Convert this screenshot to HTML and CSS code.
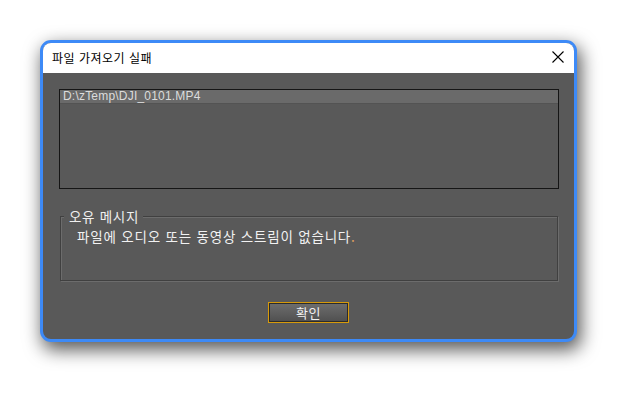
FILE: index.html
```html
<!DOCTYPE html>
<html lang="ko">
<head>
<meta charset="utf-8">
<link rel="stylesheet" href="styles.css">
</head>
<body>
<div class="window">
  <div class="titlebar">
    <span class="title">파일 가져오기 실패</span>
    <svg class="close" width="12" height="12" viewBox="0 0 12 12"><path d="M0.5 0.5 L11.5 11.5 M11.5 0.5 L0.5 11.5" stroke="#000" stroke-width="1.1" fill="none"/></svg>
  </div>
  <div class="content">
    <div class="listbox">
      <div class="row">D:\zTemp\DJI_0101.MP4</div>
    </div>
    <div class="group">
      <span class="legend">오유 메시지</span>
      <div class="message">파일에 오디오 또는 동영상 스트림이 없습니다<span class="dot">.</span></div>
    </div>
    <div class="actions">
      <button class="btn">확인</button>
    </div>
  </div>
</div>
</body>
</html>
```
FILE: styles.css
```css
html, body {
  margin: 0;
  padding: 0;
  background: #ffffff;
}
body {
  box-sizing: border-box;
  min-height: 100vh;
  padding: 40px 0 0 40px;
  font-family: "Noto Sans CJK KR", "Noto Sans", sans-serif;
}
.window {
  width: 531px;
  height: 296px;
  border: 3px solid #3d8af7;
  border-radius: 11px;
  background: #595959;
  overflow: hidden;
  display: flex;
  flex-direction: column;
  box-shadow: 3px 7px 18px 1px rgba(0,0,0,0.65);
}
.titlebar {
  height: 30px;
  flex: none;
  background: #ffffff;
  display: flex;
  align-items: center;
  justify-content: space-between;
  padding: 0 9px 0 9px;
}
.title {
  font-size: 12px;
  letter-spacing: 0.5px;
  color: #000;
  line-height: 1;
  margin-top: -1px;
}
.close {
  display: block;
  margin-right: 1px;
  margin-top: -2px;
}
.content {
  flex: 1;
  display: flex;
  flex-direction: column;
  padding: 16px 15px 0 16px;
}
.listbox {
  height: 98px;
  border: 1px solid #151515;
  background: #595959;
}
.row {
  height: 13px;
  line-height: 13px;
  background: #6a6a6a;
  border-bottom: 1px solid #535353;
  font-family: "Liberation Sans", Arial, sans-serif;
  font-size: 12px;
  letter-spacing: 0.2px;
  color: #dcdcdc;
  padding-left: 3px;
}
.group {
  margin: 27px 1px 0 1px;
  height: 63px;
  border: 1px solid #404040;
  box-shadow: 1px 1px 0 #6c6c6c, inset 1px 1px 0 #6c6c6c;
  display: flex;
  flex-direction: column;
}
.legend {
  align-self: flex-start;
  margin: -10px 0 0 3px;
  padding: 0 4px 0 5px;
  background: #595959;
  font-size: 13.5px;
  letter-spacing: 0.7px;
  line-height: 18px;
  color: #f0f0f0;
}
.message {
  margin: 2px 0 0 16px;
  font-size: 13.5px;
  letter-spacing: 0.8px;
  line-height: 18px;
  color: #f2f2f2;
}
.dot {
  color: #e0a060;
}
.actions {
  display: flex;
  justify-content: center;
  margin-top: 21px;
  padding-right: 1px;
}
.btn {
  width: 81px;
  height: 21px;
  padding: 0;
  border: 1px solid #d79a0a;
  box-shadow: inset 0 0 0 1px #2b2b2b;
  background: linear-gradient(#6e6e6e, #4f4f4f);
  color: #f0f0f0;
  font-family: "Noto Sans CJK KR", sans-serif;
  font-size: 13px;
  letter-spacing: 0.5px;
  line-height: 17px;
}
```
